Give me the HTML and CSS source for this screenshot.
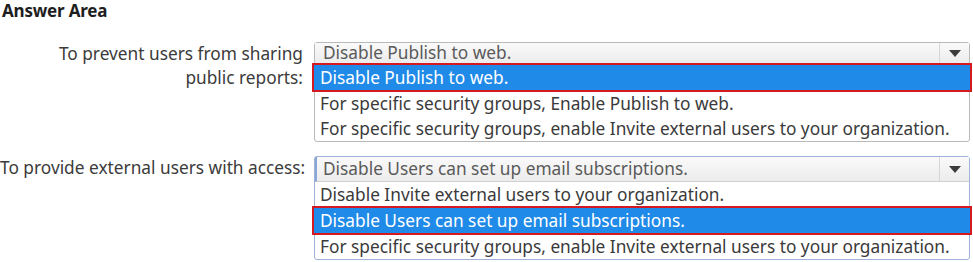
FILE: index.html
```html
<!DOCTYPE html>
<html>
<head>
<meta charset="utf-8">
<link rel="stylesheet" href="styles.css">
</head>
<body>
<h1 class="title">Answer Area</h1>
<div class="qa">
  <div class="label">To prevent users from sharing<br>public reports:</div>
  <div class="dropdown">
    <div class="head"><span class="head-text">Disable Publish to web.</span><span class="arrow"></span></div>
    <ul class="list">
      <li class="opt selected">Disable Publish to web.</li>
      <li class="opt">For specific security groups, Enable Publish to web.</li>
      <li class="opt">For specific security groups, enable Invite external users to your organization.</li>
    </ul>
  </div>
  <div class="label">To provide external users with access:</div>
  <div class="dropdown focus">
    <div class="head"><span class="head-text">Disable Users can set up email subscriptions.</span><span class="arrow"></span></div>
    <ul class="list">
      <li class="opt">Disable Invite external users to your organization.</li>
      <li class="opt selected">Disable Users can set up email subscriptions.</li>
      <li class="opt">For specific security groups, enable Invite external users to your organization.</li>
    </ul>
  </div>
</div>
</body>
</html>
```
FILE: styles.css
```css
html, body {
  margin: 0;
  padding: 0;
  background: #ffffff;
}
body {
  font-family: "Noto Sans", "Open Sans", sans-serif;
  color: #3a3a3a;
  font-size: 17.3px;
}
.title {
  margin: 0;
  padding: 1px 0 0 2px;
  font-size: 17px;
  font-weight: 700;
  color: #1e1e1e;
  line-height: 20px;
  letter-spacing: -0.2px;
}
.qa {
  display: grid;
  grid-template-columns: 303px 656px;
  column-gap: 11px;
  row-gap: 14px;
  margin-top: 21px;
}
.label {
  text-align: right;
  line-height: 24px;
  color: #3b3b3b;
  white-space: nowrap;
}
.dropdown {
  border: 1px solid #b9b9b9;
  border-radius: 3px;
  background: #fff;
}
.head {
  display: flex;
  height: 20px;
  background: linear-gradient(#fafafa, #ececec);
  border-bottom: 1px solid #cfcfcf;
}
.focus .head {
  height: 24px;
  border-left: 2px solid #8aa6d6;
}
.focus {
  border-color: #9fb3d8;
}
.head-text {
  flex: 1;
  padding-left: 8px;
  line-height: 20px;
  color: #5a5a5a;
  white-space: nowrap;
}
.focus .head-text {
  line-height: 24px;
  padding-left: 6px;
}
.arrow {
  width: 29px;
  border-left: 1px solid #d6d6d6;
  display: flex;
  align-items: center;
  justify-content: center;
}
.arrow::after {
  content: "";
  border-left: 6px solid transparent;
  border-right: 6px solid transparent;
  border-top: 7px solid #3c3c3c;
}
.list {
  list-style: none;
  margin: 0;
  padding: 0;
}
.opt {
  height: 25px;
  line-height: 25px;
  padding-left: 5px;
  color: #3a3a3a;
  white-space: nowrap;
}
.opt.selected {
  background: #1f8ae8;
  color: #ffffff;
  outline: 2px solid #d51920;
  outline-offset: -1px;
  margin: 0 -2px;
  padding-left: 7px;
  height: 27px;
  line-height: 27px;
}
```
